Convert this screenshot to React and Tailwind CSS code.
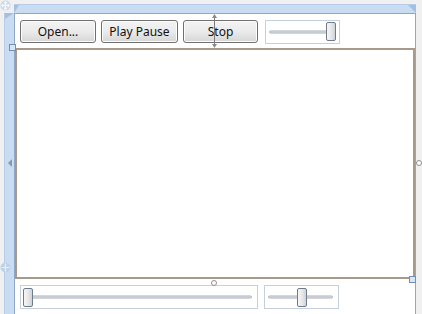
import React from 'react';

function Btn({ label, w }) {
  return (
    <button
      className={`h-[23px] ${w} rounded-[3px] border border-[#707070] bg-gradient-to-b from-[#f3f3f3] via-[#ebebeb] to-[#d6d6d6] text-[12px] leading-none text-[#111] shadow-[inset_0_0_0_1px_#fcfcfc]`}
      style={{ fontFamily: '"Noto Sans", "Liberation Sans", sans-serif' }}
    >
      {label}
    </button>
  );
}

function Thumb() {
  return (
    <div className="h-[19px] w-[10px] rounded-[2px] border border-[#6d7b8a] bg-gradient-to-r from-[#f6f6f6] via-[#e8e8e8] to-[#cfd3d8]" />
  );
}

function Slider({ w, pos }) {
  // pos: 'start' | 'mid' | 'end'
  return (
    <div className={`relative h-[24px] ${w} border border-[#c5d0dc] bg-white flex items-center px-[2px]`}>
      <div className="absolute left-[3px] right-[5px] top-1/2 h-[3px] -translate-y-1/2 rounded-full border border-[#a5aeb9] bg-[#e6e9ee]" />
      <div className={`relative flex-1 flex ${pos === 'start' ? 'justify-start' : pos === 'end' ? 'justify-end pr-[1px]' : 'justify-center'}`}>
        <Thumb />
      </div>
    </div>
  );
}

function Handle() {
  return <div className="h-[7px] w-[7px] border border-[#6e8fba] bg-[#dbe6f3]" />;
}

export default function App() {
  return (
    <div className="relative h-[314px] w-[422px] overflow-hidden bg-[#f0f0f0]">
      {/* top rail row */}
      <div className="flex pt-[4px]">
        <div className="w-[14px]" />
        <div className="relative h-[9px] w-[402px] border-t border-[#b6cde8] bg-[#c9dcf2]">
          <div className="absolute left-0 top-0 h-0 w-0 border-r-[5px] border-t-[8px] border-r-transparent border-t-[#a3bfe2]" />
          <div className="absolute right-0 top-0 h-0 w-0 border-l-[8px] border-t-[8px] border-l-transparent border-t-[#a3bfe2]" />
        </div>
      </div>

      <div className="flex pl-[4px]">
        {/* left rail */}
        <div className="relative h-[301px] w-[10px] border-l border-[#b6cde8] bg-[#cadcf1]">
          <div className="absolute left-0 top-0 h-0 w-0 border-l-[9px] border-b-[6px] border-l-[#a3bfe2] border-b-transparent" />
          <div className="absolute left-[3px] top-[146px] h-0 w-0 border-y-[4px] border-r-[4px] border-y-transparent border-r-[#8a97a8]" />
        </div>

        {/* window */}
        <div className="flex h-[302px] w-[402px] flex-col border border-[#8ea8c8] bg-white">
          <div className="flex h-[34px] items-center gap-[5px] pl-[5px] pt-[1px]">
            <Btn label="Open..." w="w-[76px]" />
            <Btn label="Play Pause" w="w-[77px]" />
            <Btn label="Stop" w="w-[75px]" />
            <div className="ml-[2px]">
              <Slider w="w-[75px]" pos="end" />
            </div>
          </div>
          <div className="h-[231px] border-2 border-[#a8998a] bg-white" />
          <div className="flex items-center gap-[6px] pl-[5px] pt-[6px]">
            <Slider w="w-[238px]" pos="start" />
            <Slider w="w-[75px]" pos="mid" />
          </div>
        </div>
      </div>

      {/* designer adorners */}
      <svg className="absolute left-0 top-0" width="11" height="11" viewBox="0 0 11 11">
        <circle cx="5.5" cy="5.5" r="5" fill="#c9d7e8" />
        <path d="M5.5 1.5v8M1.5 5.5h8M5.5 1.5l-1.5 1.8M5.5 1.5l1.5 1.8M5.5 9.5l-1.5-1.8M5.5 9.5l1.5-1.8M1.5 5.5l1.8-1.5M1.5 5.5l1.8 1.5M9.5 5.5l-1.8-1.5M9.5 5.5l-1.8 1.5" stroke="#f4f7fb" strokeWidth="1.2" fill="none" />
      </svg>
      <svg className="absolute left-0 top-[262px]" width="11" height="11" viewBox="0 0 11 11">
        <circle cx="5.5" cy="5.5" r="5" fill="#bfd1e8" />
        <path d="M5.5 1.5v8M1.5 5.5h8" stroke="#e8eff8" strokeWidth="1.2" fill="none" />
      </svg>
      <div className="absolute left-[9px] top-[44px]"><Handle /></div>
      <div className="absolute left-[409px] top-[276px]"><Handle /></div>
      <div className="absolute left-[416px] top-[160px] h-[6px] w-[6px] rounded-full border border-[#8f8f8f] bg-white" />
      <div className="absolute left-[211px] top-[280px] h-[6px] w-[6px] rounded-full border border-[#8f8f8f] bg-white" />
      <svg className="absolute left-[211px] top-[14px]" width="7" height="34" viewBox="0 0 7 34">
        <path d="M3.5 3v28" stroke="#7a7a7a" strokeWidth="1" />
        <path d="M3.5 0L1 4h5z M3.5 34L1 30h5z" fill="#8a8a8a" />
      </svg>
    </div>
  );
}
